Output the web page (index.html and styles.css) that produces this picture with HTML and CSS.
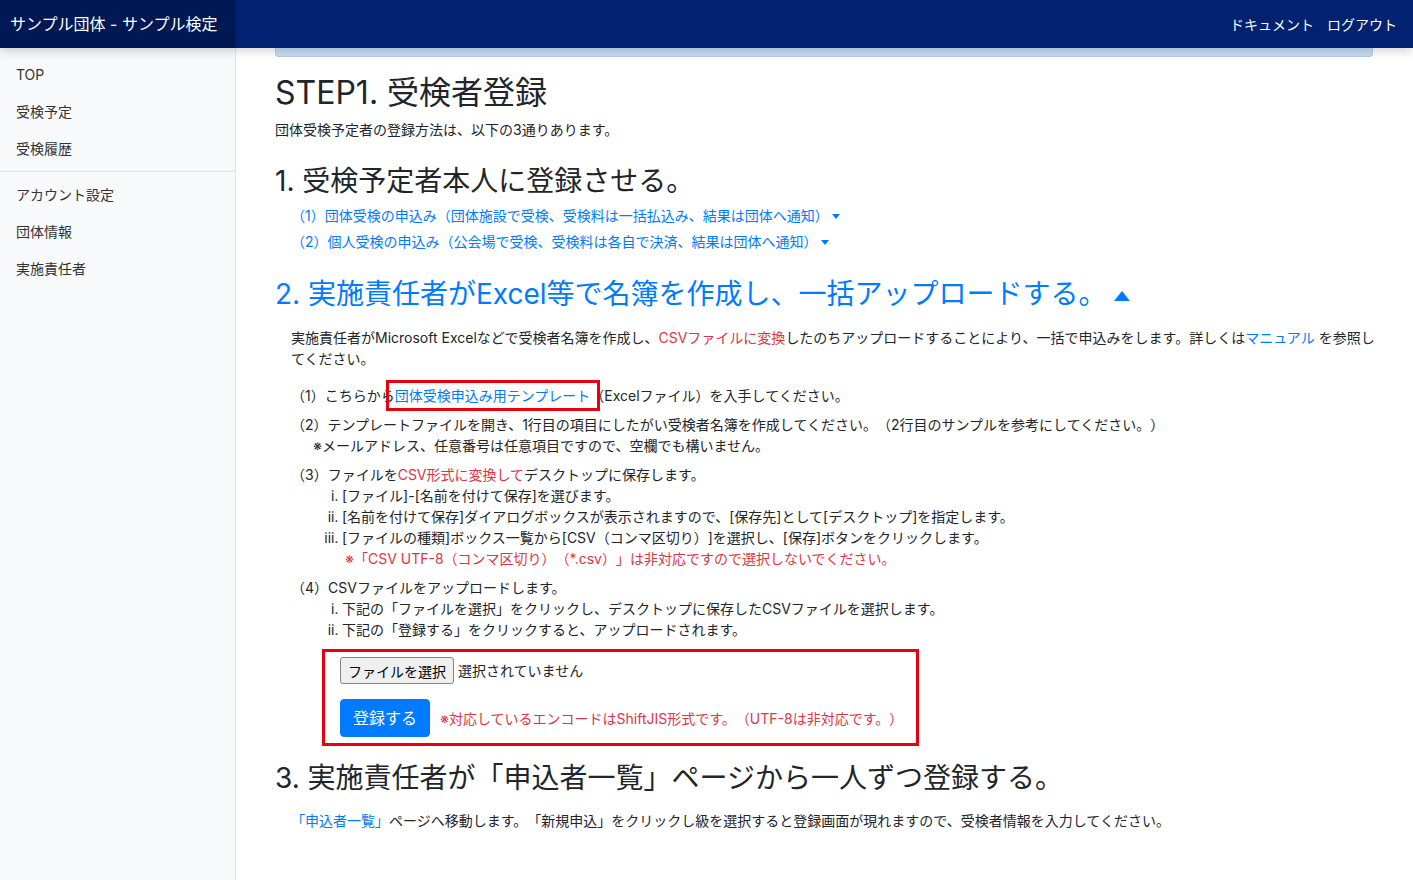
FILE: index.html
```html
<!DOCTYPE html>
<html lang="ja">
<head>
    <meta charset="UTF-8">
    <meta name="viewport" content="width=device-width, initial-scale=1.0">
    <title>受検者登録</title>
    <link rel="stylesheet" href="styles.css">
</head>
<body>
    <header class="navbar">
        <a class="brand" href="#">サンプル団体 - サンプル検定</a>
        <nav class="navbar-links">
            <a href="#">ドキュメント</a>
            <a href="#">ログアウト</a>
        </nav>
    </header>

    <div class="layout">
        <aside class="sidebar">
            <ul class="side-nav">
                <li><a href="#">TOP</a></li>
                <li><a href="#">受検予定</a></li>
                <li><a href="#">受検履歴</a></li>
            </ul>
            <hr>
            <ul class="side-nav">
                <li><a href="#">アカウント設定</a></li>
                <li><a href="#">団体情報</a></li>
                <li><a href="#">実施責任者</a></li>
            </ul>
        </aside>

        <main class="main">
            <div class="notice"></div>

            <h1>STEP1. 受検者登録</h1>
            <p>団体受検予定者の登録方法は、以下の3通りあります。</p>

            <h2>1. 受検予定者本人に登録させる。</h2>
            <ul class="toggle-list">
                <li><a href="#">（1）団体受検の申込み（団体施設で受検、受検料は一括払込み、結果は団体へ通知）<svg class="caret-down" width="8" height="5" viewBox="0 0 8 5"><path d="M0 0h8L4 5z"/></svg></a></li>
                <li><a href="#">（2）個人受検の申込み（公会場で受検、受検料は各自で決済、結果は団体へ通知）<svg class="caret-down" width="8" height="5" viewBox="0 0 8 5"><path d="M0 0h8L4 5z"/></svg></a></li>
            </ul>

            <h2 class="open"><a href="#">2. 実施責任者がExcel等で名簿を作成し、一括アップロードする。<svg class="caret-up" width="16" height="10" viewBox="0 0 16 10"><path d="M8 0l8 10H0z"/></svg></a></h2>
            <div class="section-body">
                <p class="desc">実施責任者がMicrosoft Excelなどで受検者名簿を作成し、<span class="danger">CSVファイルに変換</span>したのちアップロードすることにより、一括で申込みをします。詳しくは<a href="#">マニュアル</a> を参照してください。</p>

                <ul class="steps">
                    <li>（1）こちらから<a class="marked" href="#">団体受検申込み用テンプレート</a>（Excelファイル）を入手してください。</li>
                    <li>（2）テンプレートファイルを開き、1行目の項目にしたがい受検者名簿を作成してください。（2行目のサンプルを参考にしてください。）
                        <p class="note">※メールアドレス、任意番号は任意項目ですので、空欄でも構いません。</p>
                    </li>
                    <li>（3）ファイルを<span class="danger">CSV形式に変換して</span>デスクトップに保存します。
                        <ol class="sub-steps">
                            <li>[ファイル]-[名前を付けて保存]を選びます。</li>
                            <li>[名前を付けて保存]ダイアログボックスが表示されますので、[保存先]として[デスクトップ]を指定します。</li>
                            <li>[ファイルの種類]ボックス一覧から[CSV（コンマ区切り）]を選択し、[保存]ボタンをクリックします。</li>
                        </ol>
                        <p class="warn danger">※「CSV UTF-8（コンマ区切り）（*.csv）」は非対応ですので選択しないでください。</p>
                    </li>
                    <li>（4）CSVファイルをアップロードします。
                        <ol class="sub-steps">
                            <li>下記の「ファイルを選択」をクリックし、デスクトップに保存したCSVファイルを選択します。</li>
                            <li>下記の「登録する」をクリックすると、アップロードされます。</li>
                        </ol>
                    </li>
                </ul>

                <form class="upload-box">
                    <div class="file-row">
                        <button type="button" class="file-button">ファイルを選択</button>
                        <span class="file-name">選択されていません</span>
                    </div>
                    <div class="submit-row">
                        <button type="submit" class="btn-primary">登録する</button>
                        <span class="encode-note danger">※対応しているエンコードはShiftJIS形式です。（UTF-8は非対応です。）</span>
                    </div>
                </form>
            </div>

            <h2>3. 実施責任者が「申込者一覧」ページから一人ずつ登録する。</h2>
            <p class="section-text"><a href="#">「申込者一覧」</a>ページへ移動します。「新規申込」をクリックし級を選択すると登録画面が現れますので、受検者情報を入力してください。</p>
        </main>
    </div>
</body>
</html>
```

FILE: styles.css
```css
*{
    margin: 0;
    padding: 0;
    box-sizing: border-box;
}

body{
    display: flex;
    flex-direction: column;
    height: 100vh;
    overflow: hidden;
    font-family: "Inter", "Noto Sans CJK JP", sans-serif;
    font-size: 14px;
    line-height: 21px;
    color: #212529;
    background-color: #fff;
    text-spacing-trim: space-all;
}

a{
    color: #007bff;
    text-decoration: none;
}

ul, ol{
    list-style: none;
}

.danger{
    color: #dc3545;
}

/* ヘッダー */
.navbar{
    display: flex;
    align-items: center;
    justify-content: space-between;
    height: 48px;
    flex-shrink: 0;
    background-color: #002270;
    position: relative;
    z-index: 2;
    box-shadow: 0 3px 10px rgba(0, 0, 0, 0.18);
}

.brand{
    display: flex;
    align-items: center;
    width: 236px;
    height: 100%;
    padding-left: 10px;
    font-size: 16px;
    color: #fff;
    background-color: rgba(0, 0, 0, 0.25);
}

.navbar-links{
    display: flex;
    padding-right: 16px;
}

.navbar-links a{
    color: #fff;
    font-size: 14px;
    margin-left: 13px;
}

/* レイアウト */
.layout{
    display: flex;
    flex: 1;
    min-height: 0;
}

.sidebar{
    width: 236px;
    flex-shrink: 0;
    padding-top: 8px;
    background-color: #f8f9fa;
    border-right: 1px solid #e4e6e8;
}

.side-nav a{
    display: block;
    padding: 8px 16px;
    color: #333;
}

.sidebar hr{
    border: 0;
    border-top: 1px solid #dee2e6;
    margin: 4px 0;
}

.main{
    flex: 1;
    padding: 0 40px 0 39px;
}

.notice{
    height: 9px;
    background-color: #c6dcf3;
    border: 1px solid #b3cce6;
    border-top: 0;
    border-radius: 0 0 4px 4px;
}

h1{
    font-size: 32px;
    line-height: 38px;
    font-weight: 400;
    margin: 17px 0 7px;
}

h2{
    font-size: 28px;
    line-height: 34px;
    font-weight: 400;
    margin-top: 24px;
}

h2.open{
    margin-top: 22px;
}

.caret-up{
    fill: #007bff;
    margin-left: 7px;
    vertical-align: 3px;
}

.toggle-list{
    margin-top: 5px;
    padding-left: 16px;
}

.toggle-list li{
    line-height: 26px;
}

.caret-down{
    fill: #007bff;
    margin-left: 3px;
    vertical-align: 2px;
}

/* 一括アップロード */
.section-body{
    padding-left: 16px;
}

.desc{
    margin: 16px -8px 0 0;
}

.steps{
    margin-top: 16px;
}

.steps > li{
    margin-top: 8px;
}

.steps > li:first-child{
    margin-top: 0;
}

.marked{
    position: relative;
}

.marked::after{
    content: "";
    position: absolute;
    top: -7px;
    bottom: -7px;
    left: -9px;
    right: -10px;
    border: 3px solid #e60012;
}

.note{
    padding-left: 22px;
}

.sub-steps{
    list-style: lower-roman;
    padding-left: 51px;
}

.warn{
    padding-left: 54px;
}

.upload-box{
    width: 597px;
    margin: 9px 0 0 31px;
    padding: 5px 15px 6px;
    border: 3px solid #e60012;
}

.file-row{
    display: flex;
    align-items: center;
}

.file-button{
    height: 27px;
    padding: 0 7px;
    font-family: inherit;
    font-size: 14px;
    color: #000;
    background-color: #efefef;
    border: 1px solid #858585;
    border-radius: 3px;
}

.file-name{
    margin-left: 4px;
}

.submit-row{
    display: flex;
    align-items: center;
    margin-top: 15px;
}

.btn-primary{
    flex-shrink: 0;
    padding: 6px 12px;
    font-family: inherit;
    font-size: 16px;
    line-height: 24px;
    color: #fff;
    background-color: #007bff;
    border: 1px solid #007bff;
    border-radius: 4px;
    margin-right: 10px;
    white-space: nowrap;
}

.encode-note{
    white-space: nowrap;
}

.section-body + h2{
    margin-top: 15px;
}

.section-text{
    margin-top: 15px;
    padding-left: 16px;
}
```
